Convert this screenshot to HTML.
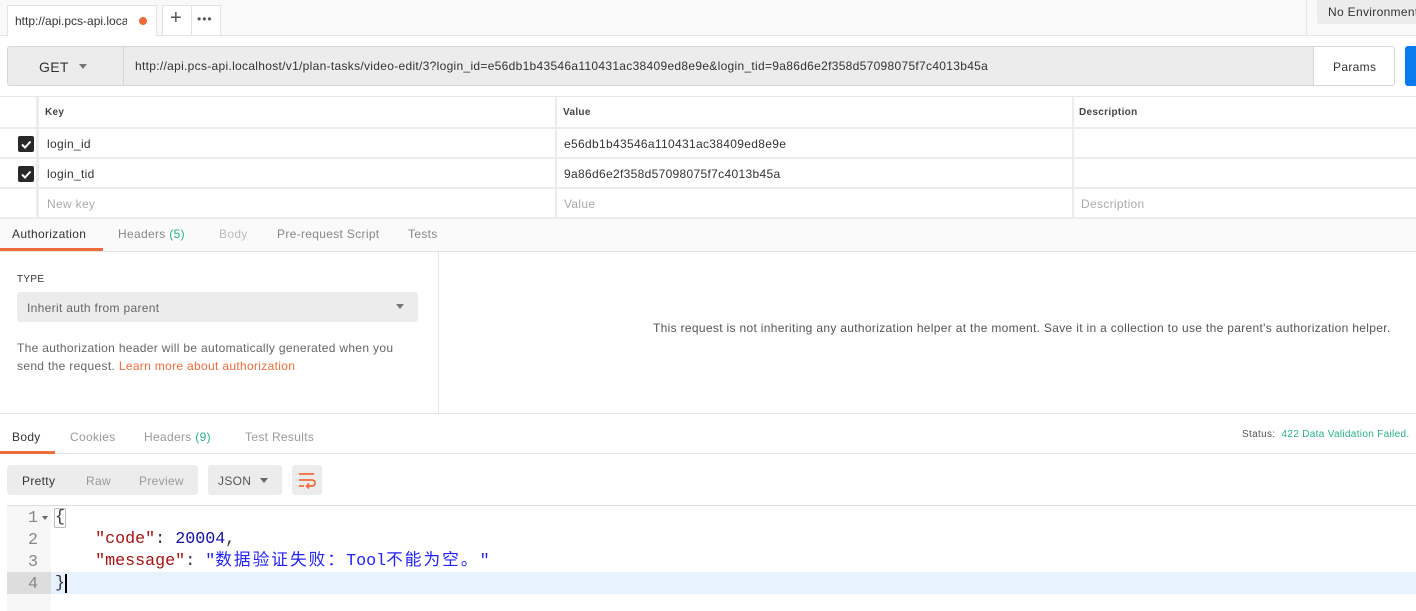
<!DOCTYPE html>
<html><head><meta charset="utf-8"><style>
*{box-sizing:border-box;margin:0;padding:0}
body{width:1416px;height:611px;overflow:hidden;background:#fff;font-family:"Liberation Sans",sans-serif;font-size:12px;color:#505050;position:relative;letter-spacing:0.32px}
.a{position:absolute}
.mono{font-family:"Liberation Mono","Noto Sans CJK SC",monospace;font-size:16.7px;letter-spacing:0}
.cj{letter-spacing:2px}
</style></head><body>
<div class="a" style="left:0;top:0;width:1416px;height:36px;background:#f9f9f9;border-bottom:1px solid #e6e6e6"></div>
<div class="a" style="left:7px;top:5px;width:150px;height:31px;background:#fff;border:1px solid #e3e3e3;border-bottom:none"></div>
<div class="a" style="left:15px;top:14px;color:#333;font-size:12px;letter-spacing:0;width:112px;overflow:hidden;white-space:nowrap">http://api.pcs-api.local</div>
<div class="a" style="left:139px;top:17px;width:8px;height:8px;border-radius:50%;background:#f26b3a"></div>
<div class="a" style="left:162px;top:5px;width:59px;height:30px;background:#fff;border:1px solid #e3e3e3;border-bottom:none"></div>
<div class="a" style="left:191px;top:5px;width:1px;height:30px;background:#e3e3e3"></div>
<div class="a" style="left:170px;top:7px;font-size:20px;color:#555">+</div>
<div class="a" style="left:197px;top:12px;font-size:12px;color:#555;letter-spacing:1px">•••</div>
<div class="a" style="left:1306px;top:0;width:1px;height:35px;background:#e6e6e6"></div>
<div class="a" style="left:1317px;top:0;width:110px;height:24px;background:#ececec;border-radius:0 0 3px 3px"></div>
<div class="a" style="left:1328px;top:5px;color:#333;white-space:nowrap">No Environment</div>

<div class="a" style="left:7px;top:46px;width:1388px;height:40px;background:#ececec;border:1px solid #d6d6d6;border-radius:3px"></div>
<div class="a" style="left:123px;top:47px;width:1px;height:38px;background:#d6d6d6"></div>
<div class="a" style="left:39px;top:59px;font-size:14px;color:#333">GET</div>
<div class="a" style="left:79px;top:64px;border:4px solid transparent;border-top:5px solid #777"></div>
<div class="a" style="left:135px;top:59px;color:#333;letter-spacing:0.3px">http://api.pcs-api.localhost/v1/plan-tasks/video-edit/3?login_id=e56db1b43546a110431ac38409ed8e9e&amp;login_tid=9a86d6e2f358d57098075f7c4013b45a</div>
<div class="a" style="left:1313px;top:46px;width:82px;height:40px;background:#fff;border:1px solid #d6d6d6;border-radius:0 3px 3px 0"></div>
<div class="a" style="left:1333px;top:60px;color:#333">Params</div>
<div class="a" style="left:1405px;top:46px;width:20px;height:40px;background:#097bed;border-radius:3px"></div>

<div class="a" style="left:0;top:96px;width:1416px;height:1px;background:#e6e6e6"></div>
<div class="a" style="left:0;top:127px;width:1416px;height:2px;background:#ececec"></div>
<div class="a" style="left:0;top:157px;width:1416px;height:2px;background:#ececec"></div>
<div class="a" style="left:0;top:187px;width:1416px;height:2px;background:#ececec"></div>
<div class="a" style="left:0;top:217px;width:1416px;height:2px;background:#ececec"></div>
<div class="a" style="left:36px;top:97px;width:3px;height:120px;background:#ececec"></div>
<div class="a" style="left:555px;top:97px;width:2px;height:120px;background:#ececec"></div>
<div class="a" style="left:1072px;top:97px;width:2px;height:120px;background:#ececec"></div>
<div class="a" style="left:45px;top:107px;font-size:10px;font-weight:bold;color:#444">Key</div>
<div class="a" style="left:563px;top:107px;font-size:10px;font-weight:bold;color:#444">Value</div>
<div class="a" style="left:1079px;top:107px;font-size:10px;font-weight:bold;color:#444">Description</div>
<svg class="a" style="left:18px;top:136px" width="16" height="16"><rect width="16" height="16" rx="2" fill="#282828"/><path d="M4 8.5l3 3 5.5-6" stroke="#fff" stroke-width="2" fill="none"/></svg>
<svg class="a" style="left:18px;top:166px" width="16" height="16"><rect width="16" height="16" rx="2" fill="#282828"/><path d="M4 8.5l3 3 5.5-6" stroke="#fff" stroke-width="2" fill="none"/></svg>
<div class="a" style="left:47px;top:137px;color:#333">login_id</div>
<div class="a" style="left:564px;top:137px;color:#333">e56db1b43546a110431ac38409ed8e9e</div>
<div class="a" style="left:47px;top:167px;color:#333">login_tid</div>
<div class="a" style="left:564px;top:167px;color:#333">9a86d6e2f358d57098075f7c4013b45a</div>
<div class="a" style="left:47px;top:197px;color:#aaa">New key</div>
<div class="a" style="left:564px;top:197px;color:#aaa">Value</div>
<div class="a" style="left:1081px;top:197px;color:#aaa">Description</div>

<div class="a" style="left:0;top:219px;width:1416px;height:33px;background:#fafafa;border-bottom:1px solid #e6e6e6"></div>
<div class="a" style="left:0;top:248px;width:103px;height:3px;background:#f26b3a"></div>
<div class="a" style="left:12px;top:227px;color:#333">Authorization</div>
<div class="a" style="left:118px;top:227px;color:#888">Headers <span style="color:#26b47f">(5)</span></div>
<div class="a" style="left:219px;top:227px;color:#bbb">Body</div>
<div class="a" style="left:277px;top:227px;color:#888">Pre-request Script</div>
<div class="a" style="left:408px;top:227px;color:#888">Tests</div>
<div class="a" style="left:438px;top:252px;width:1px;height:161px;background:#e6e6e6"></div>
<div class="a" style="left:17px;top:274px;font-size:10px;color:#333">TYPE</div>
<div class="a" style="left:17px;top:292px;width:401px;height:30px;background:#ececec;border-radius:3px"></div>
<div class="a" style="left:27px;top:301px;color:#666">Inherit auth from parent</div>
<div class="a" style="left:396px;top:304px;border:4px solid transparent;border-top:5px solid #777"></div>
<div class="a" style="left:17px;top:339px;line-height:18px;color:#666;width:385px">The authorization header will be automatically generated when you send the request. <span style="color:#f26b3a">Learn more about authorization</span></div>
<div class="a" style="left:653px;top:321px;color:#555;white-space:nowrap">This request is not inheriting any authorization helper at the moment. Save it in a collection to use the parent's authorization helper.</div>
<div class="a" style="left:0;top:413px;width:1416px;height:1px;background:#e6e6e6"></div>

<div class="a" style="left:0;top:453px;width:1416px;height:1px;background:#e6e6e6"></div>
<div class="a" style="left:0;top:451px;width:55px;height:3px;background:#f26b3a"></div>
<div class="a" style="left:12px;top:430px;color:#333">Body</div>
<div class="a" style="left:70px;top:430px;color:#999">Cookies</div>
<div class="a" style="left:144px;top:430px;color:#999">Headers <span style="color:#26b47f">(9)</span></div>
<div class="a" style="left:245px;top:430px;color:#999">Test Results</div>
<div class="a" style="left:1242px;top:429px;font-size:10px;color:#555;white-space:nowrap">Status: <span style="color:#26b47f;margin-left:3px">422 Data Validation Failed.</span></div>

<div class="a" style="left:7px;top:465px;width:191px;height:30px;background:#ececec;border-radius:3px"></div>
<div class="a" style="left:22px;top:474px;color:#333">Pretty</div>
<div class="a" style="left:86px;top:474px;color:#999">Raw</div>
<div class="a" style="left:139px;top:474px;color:#999">Preview</div>
<div class="a" style="left:208px;top:465px;width:74px;height:30px;background:#ececec;border-radius:3px"></div>
<div class="a" style="left:218px;top:474px;color:#555">JSON</div>
<div class="a" style="left:260px;top:478px;border:4px solid transparent;border-top:5px solid #666"></div>
<div class="a" style="left:292px;top:465px;width:30px;height:30px;background:#ececec;border-radius:3px"></div>
<svg class="a" style="left:297px;top:471px" width="20" height="18" viewBox="0 0 20 18"><path d="M2 3h15M2 9h13a3 3 0 0 1 0 6h-5M2 15h5M12 12.5l-2.5 2.5 2.5 2.5" stroke="#f26b3a" stroke-width="1.7" fill="none"/></svg>

<div class="a" style="left:7px;top:505px;width:1409px;height:1px;background:#ddd"></div>
<div class="a" style="left:7px;top:506px;width:44px;height:105px;background:#f7f7f7"></div>
<div class="a" style="left:7px;top:572px;width:44px;height:22px;background:#ddd"></div>
<div class="a" style="left:51px;top:572px;width:1365px;height:22px;background:#e8f2fe"></div>
<div class="a mono" style="left:28px;top:508px;color:#888;line-height:22px">1<br>2<br>3<br>4</div>
<div class="a" style="left:42px;top:516px;border:3px solid transparent;border-top:4px solid #666"></div>
<div class="a mono" style="left:55px;top:507px;line-height:22px;color:#333;white-space:pre">{
    <span style="color:#a11">"code"</span>: <span style="color:#11a">20004</span>,
    <span style="color:#a11">"message"</span>: <span style="color:#22f">"<span class="cj">数据验证失败：</span>Tool<span class="cj">不能为空。</span>"</span>
}</div>
<div class="a" style="left:54px;top:508px;width:12px;height:20px;border:1px solid #bbb;border-radius:2px"></div>
<div class="a" style="left:65px;top:574px;width:2px;height:19px;background:#000"></div>
</body></html>
